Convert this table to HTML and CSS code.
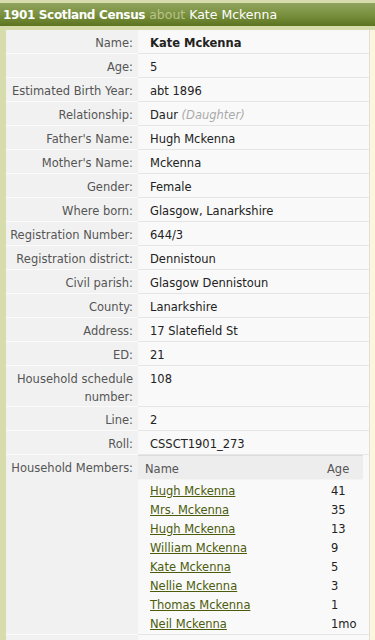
FILE: index.html
```html
<!DOCTYPE html>
<html>
<head>
<meta charset="utf-8">
<link rel="stylesheet" href="styles.css">
</head>
<body>
<div class="page">
  <h1 class="header"><strong>1901 Scotland Census</strong> <span class="about">about</span> Kate Mckenna</h1>
  <div class="content">
    <div class="left-strip"></div>
    <div class="panel">
      <table class="record">
        <tr><th>Name:</th><td><b>Kate Mckenna</b></td></tr>
        <tr><th>Age:</th><td>5</td></tr>
        <tr><th>Estimated Birth Year:</th><td>abt 1896</td></tr>
        <tr><th>Relationship:</th><td>Daur <i class="note">(Daughter)</i></td></tr>
        <tr><th>Father's Name:</th><td>Hugh Mckenna</td></tr>
        <tr><th>Mother's Name:</th><td>Mckenna</td></tr>
        <tr><th>Gender:</th><td>Female</td></tr>
        <tr><th>Where born:</th><td>Glasgow, Lanarkshire</td></tr>
        <tr><th>Registration Number:</th><td>644/3</td></tr>
        <tr><th>Registration district:</th><td>Dennistoun</td></tr>
        <tr><th>Civil parish:</th><td>Glasgow Dennistoun</td></tr>
        <tr><th>County:</th><td>Lanarkshire</td></tr>
        <tr><th>Address:</th><td>17 Slatefield St</td></tr>
        <tr><th>ED:</th><td>21</td></tr>
        <tr class="tight"><th>Household schedule number:</th><td>108</td></tr>
        <tr><th>Line:</th><td>2</td></tr>
        <tr><th>Roll:</th><td>CSSCT1901_273</td></tr>
        <tr>
          <th>Household Members:</th>
          <td class="members-cell">
            <table class="members">
              <tr class="mhead"><th class="mname">Name</th><th class="mage">Age</th></tr>
              <tr class="first"><td class="mname"><a href="#">Hugh Mckenna</a></td><td class="mage">41</td></tr>
              <tr><td class="mname"><a href="#">Mrs. Mckenna</a></td><td class="mage">35</td></tr>
              <tr><td class="mname"><a href="#">Hugh Mckenna</a></td><td class="mage">13</td></tr>
              <tr><td class="mname"><a href="#">William Mckenna</a></td><td class="mage">9</td></tr>
              <tr><td class="mname"><a href="#">Kate Mckenna</a></td><td class="mage">5</td></tr>
              <tr><td class="mname"><a href="#">Nellie Mckenna</a></td><td class="mage">3</td></tr>
              <tr><td class="mname"><a href="#">Thomas Mckenna</a></td><td class="mage">1</td></tr>
              <tr><td class="mname"><a href="#">Neil Mckenna</a></td><td class="mage">1mo</td></tr>
            </table>
          </td>
        </tr>
        <tr><th>&nbsp;</th><td>&nbsp;</td></tr>
      </table>
    </div>
    <div class="right-strip"></div>
  </div>
</div>
</body>
</html>
```

FILE: styles.css
```css
html, body {
  margin: 0;
  padding: 0;
}
body {
  background: #d6dcab;
  font-family: "DejaVu Sans", Verdana, sans-serif;
  font-size: 11.5px;
  color: #222;
}
.page {
  padding-top: 3px;
}
.header {
  margin: 0;
  height: 23px;
  line-height: 23px;
  padding-left: 3px;
  font-size: 12.5px;
  font-weight: normal;
  color: #fff;
  background: linear-gradient(to bottom, #90a35e 0%, #7a913f 50%, #5c7420 100%);
  white-space: nowrap;
  overflow: hidden;
}
.header strong {
  font-size: 12px;
  font-weight: bold;
  letter-spacing: -0.35px;
}
.header .about {
  color: #b9c38c;
}
.content {
  display: flex;
  margin-top: 4px;
}
.left-strip {
  width: 6px;
  flex: 0 0 6px;
  background: #d6dcab;
}
.panel {
  flex: 0 0 363px;
  width: 363px;
  background: #f1f1f1;
  border-right: 1px solid #dedede;
}
.right-strip {
  flex: 1;
  background: #fdf6dd;
}
.record {
  width: 100%;
  border-collapse: collapse;
  border-spacing: 0;
}
.record > tbody > tr > th {
  width: 127px;
  text-align: right;
  vertical-align: top;
  font-weight: normal;
  color: #555;
  padding: 4px 5px 1px 0;
  line-height: 18px;
  background: #f1f1f1;
  border-bottom: 1px solid #fbfbfb;
}
.record > tbody > tr > td {
  vertical-align: top;
  padding: 4px 4px 1px 12px;
  line-height: 18px;
  background: #f9f9f9;
  border-bottom: 1px solid #e6e6e6;
  color: #222;
}
.record > tbody > tr.tight > th,
.record > tbody > tr.tight > td {
  padding-bottom: 0;
}
.record b {
  font-weight: bold;
}
.note {
  color: #aaa;
}
.record > tbody > tr > td.members-cell {
  padding: 0 5px 0 0;
}
.members {
  width: 225px;
  border-collapse: collapse;
  border-spacing: 0;
}
.members .mhead th {
  background: #ededed;
  border-top: 1px solid #dcdcdc;
  font-weight: normal;
  text-align: left;
  color: #555;
  line-height: 18px;
  padding: 4px 0 1px 7px;
  border-bottom: 1px solid #f4f4f4;
}
.members td {
  line-height: 19px;
  padding: 0 0 0 12px;
  color: #222;
}
.members tr.first td {
  padding-top: 2px;
}
.members .mname {
  width: 170px;
}
.members th.mage {
  padding-left: 7px;
}
.members td.mage {
  padding-left: 11px;
}
.members a {
  color: #4c5c0c;
  text-decoration: underline;
}
```
